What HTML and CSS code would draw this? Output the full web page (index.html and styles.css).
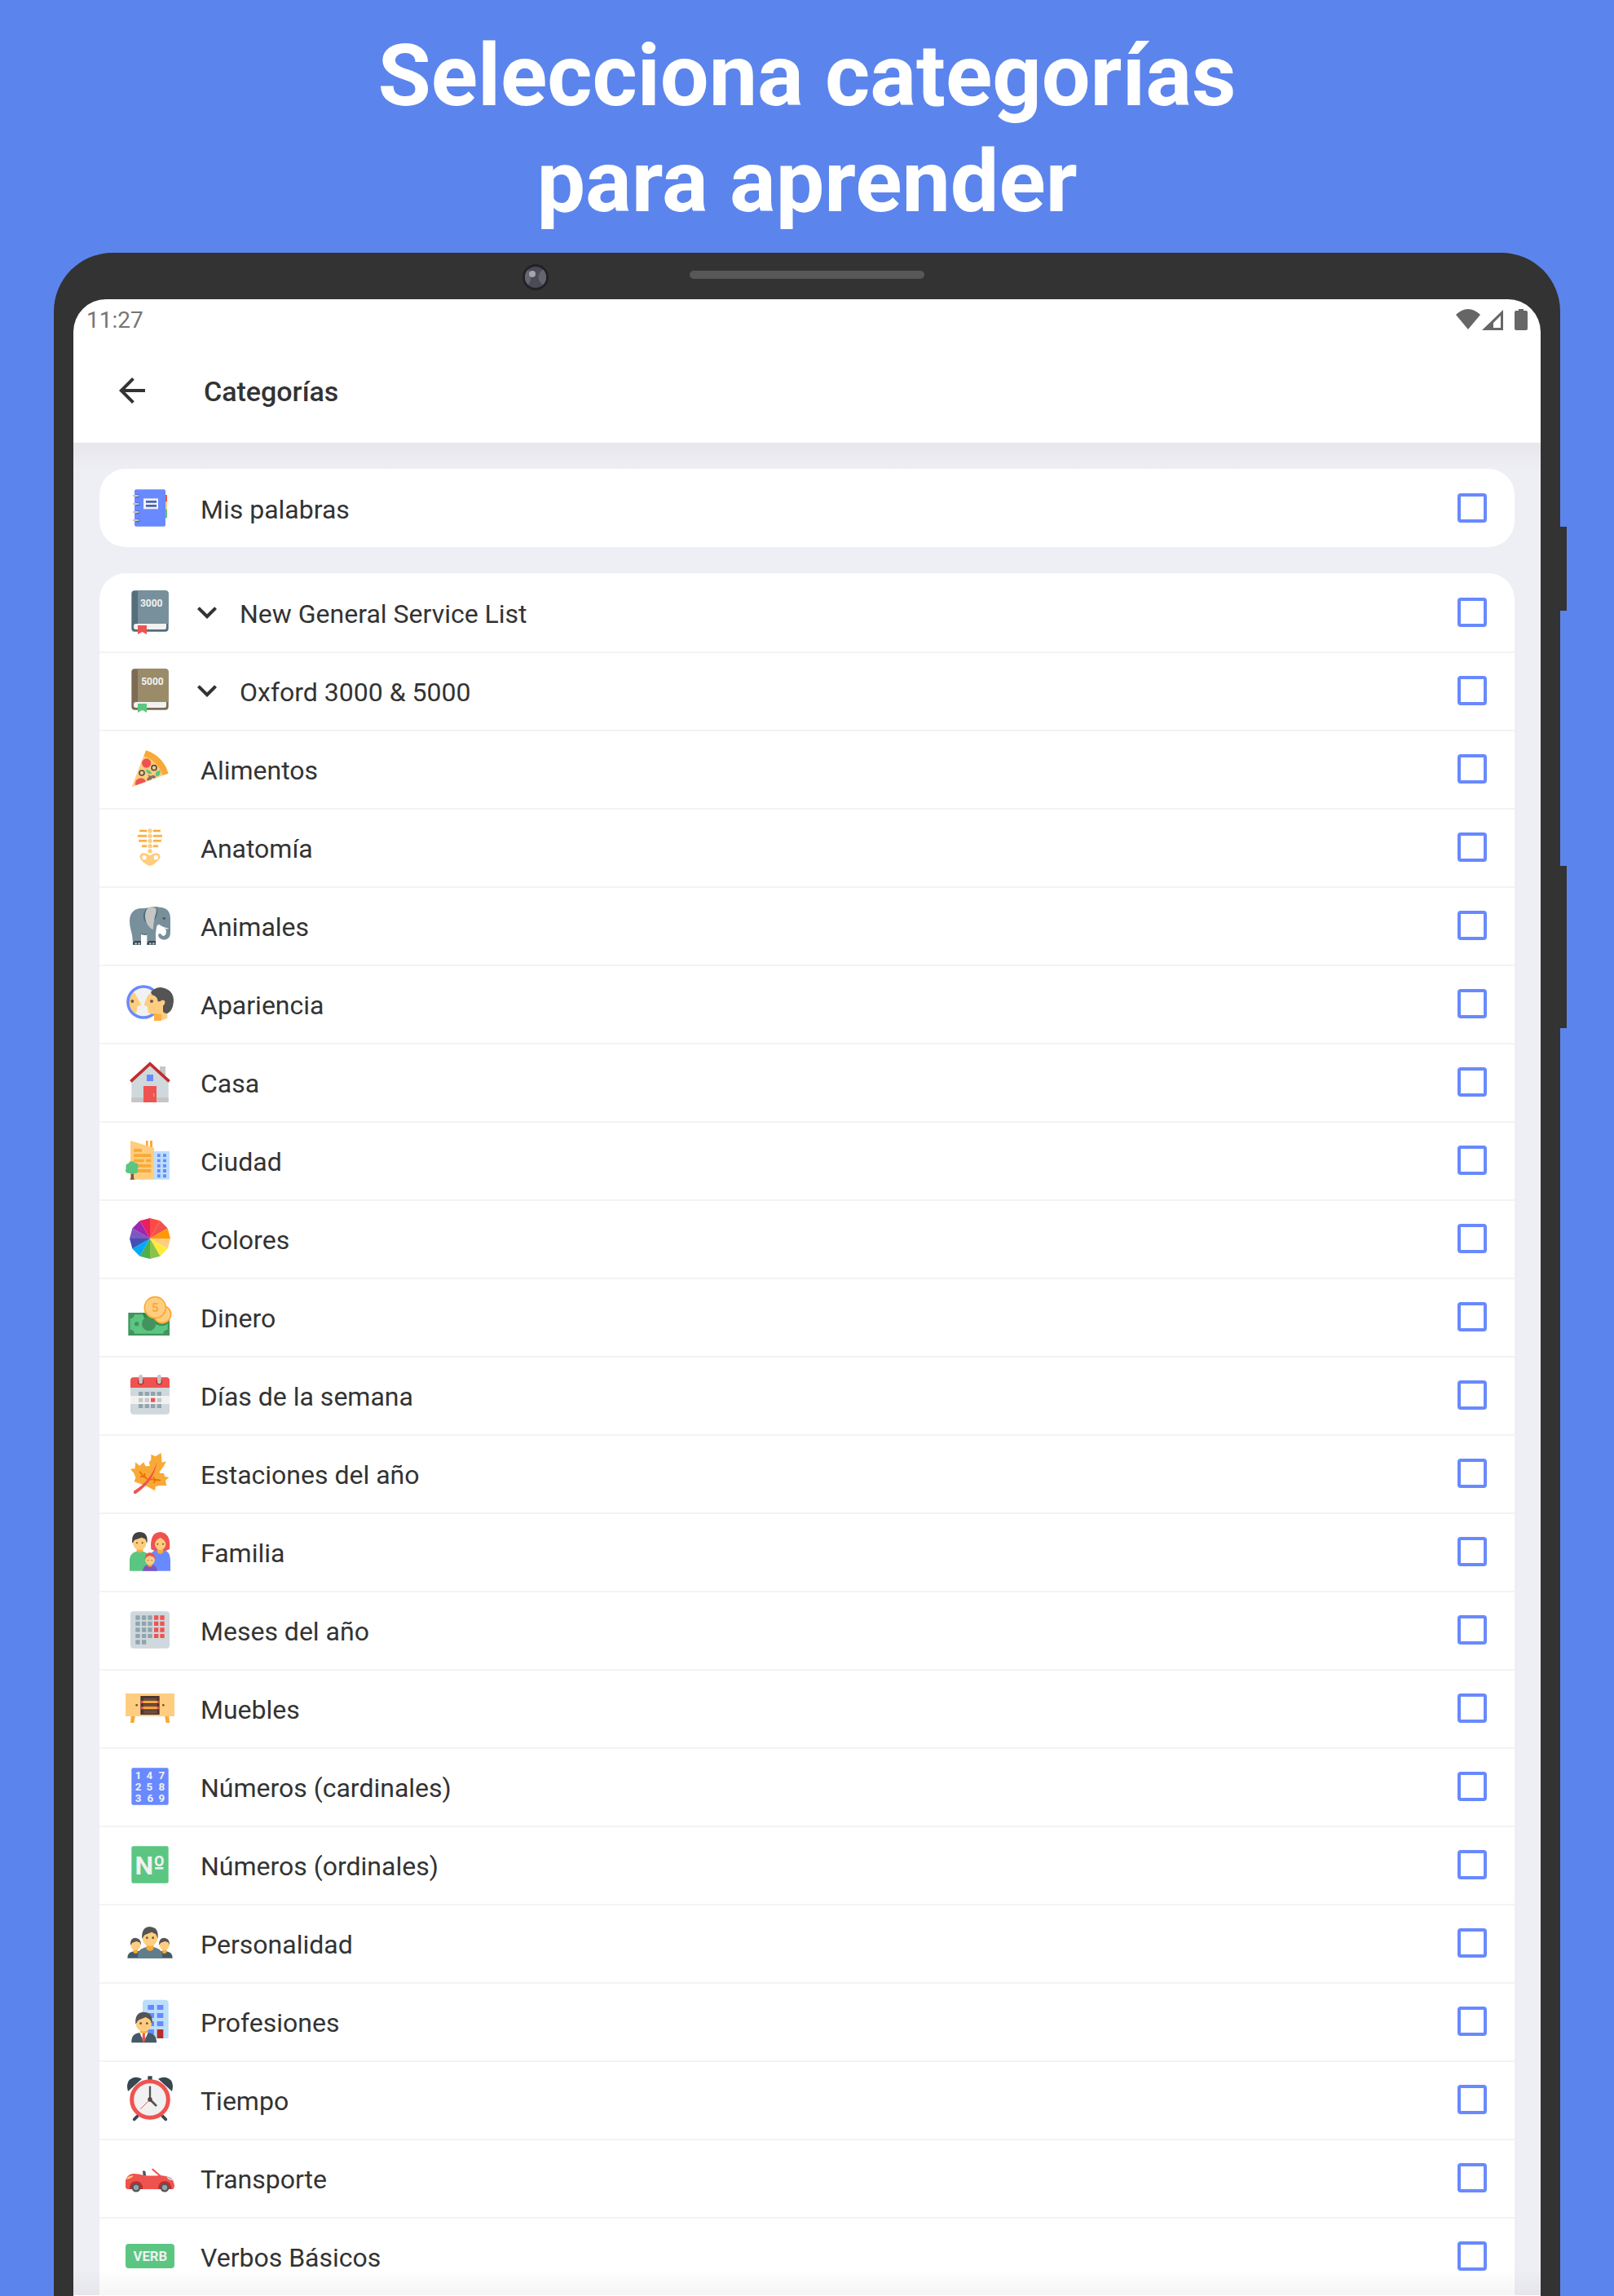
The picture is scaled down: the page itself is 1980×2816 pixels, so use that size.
FILE: index.html
```html
<!DOCTYPE html>
<html lang="es">
<head>
    <meta charset="UTF-8">
    <meta name="viewport" content="width=device-width, initial-scale=1.0">
    <title>Categorías</title>
    <link rel="stylesheet" href="styles.css">
</head>
<body>

    <h1 class="headline">Selecciona categorías<br>para aprender</h1>

    <div class="tablet">
        <!-- Camera, speaker and side buttons -->
        <svg class="camera" viewBox="0 0 32 32">
            <circle cx="16" cy="16" r="16" fill="#222226"/>
            <circle cx="16" cy="16" r="13" fill="#4b4b57"/>
            <path d="M7 6.500Q14 16 7 25.500A13 13 0 0 1 7 6.500zM25 6.500Q14 16 25 25.500A13 13 0 0 0 25 6.500z" fill="#656570"/>
            <circle cx="12" cy="12" r="4" fill="#a5a5ad"/>
        </svg>
        <div class="speaker"></div>
        <div class="side-button power"></div>
        <div class="side-button volume"></div>

        <div class="screen">
            <div class="status-bar">
                <span class="clock">11:27</span>
                <svg class="status-icons" viewBox="0 0 88 27">
                    <path d="M0 7Q15-7 30 7L15 25z"/>
                    <path d="M32 26L58 1V26zM46 23H55V8L46 17z" fill-rule="evenodd"/>
                    <path d="M72 4Q72 2 74 2H77V0H83V2H86Q88 2 88 4V24Q88 26 86 26H74Q72 26 72 24z"/>
                </svg>
            </div>

            <header class="app-bar">
                <button class="back" aria-label="Atrás">
                    <svg viewBox="0 0 24 24"><path d="M20 11H7.830l5.590-5.590L12 4l-8 8 8 8 1.410-1.410L7.830 13H20v-2z"/></svg>
                </button>
                <h2>Categorías</h2>
            </header>

            <main class="content">
                <ul class="card">
                    <li class="row">
                        <svg class="icon" viewBox="72 39 180 180">
                            <path fill="#ef5350" d="M216 81h9v26h-9z"/>
                            <path fill="#ffcd7f" d="M216 107h9v26h-9z"/>
                            <path fill="#5bc682" d="M216 133h9v33h-9z"/>
                            <rect x="105" y="61" width="114" height="136" rx="6" fill="#6889ff"/>
                            <path fill="#f1f1f1" d="M138 94h54v39h-54z"/>
                            <path fill="#4762b8" d="M147 102h39v8h-39zM147 117h39v8h-39z"/>
                            <g fill="#4d65bd"><circle cx="117" cy="85" r="7"/><circle cx="117" cy="115" r="7"/><circle cx="117" cy="145" r="7"/><circle cx="117" cy="175" r="7"/></g>
                            <path fill="#c6c6c6" d="M99 81h22v6H99zM99 111h22v6H99zM99 141h22v6H99zM99 171h22v6H99z"/>
                        </svg>
                        <label for="mis-palabras">Mis palabras</label>
                        <input type="checkbox" id="mis-palabras">
                    </li>
                </ul>

                <ul class="card">
                    <li class="row">
                        <svg class="icon" viewBox="72 423 180 180">
                            <rect x="94" y="433" width="136" height="151" rx="12" fill="#546e7a"/>
                            <path fill="#78909c" d="M117 433h101q12 0 12 12v110H117z"/>
                            <path fill="#f1f1f1" d="M110 555h112v14q0 7-7 7H110q-8 0-8-8v-5q0-8 8-8z"/>
                            <path fill="#ef5350" d="M117 561h33v33l-16-9-17 9z"/>
                            <text class="icon-text" x="167" y="492" font-size="36">3000</text>
                        </svg>
                        <button class="expand" aria-label="Mostrar niveles">
                            <svg viewBox="0 0 24 24"><path d="M7.410 8.590L12 13.170l4.590-4.580L18 10l-6 6-6-6z"/></svg>
                        </button>
                        <label for="ngsl">New General Service List</label>
                        <input type="checkbox" id="ngsl">
                    </li>
                    <li class="row">
                        <svg class="icon" viewBox="72 423 180 180">
                            <rect x="94" y="433" width="136" height="151" rx="12" fill="#7c6b55"/>
                            <path fill="#9a8c69" d="M117 433h101q12 0 12 12v110H117z"/>
                            <path fill="#f1f1f1" d="M110 555h112v14q0 7-7 7H110q-8 0-8-8v-5q0-8 8-8z"/>
                            <path fill="#5bc682" d="M117 561h33v33l-16-9-17 9z"/>
                            <text class="icon-text" x="171" y="492" font-size="36">5000</text>
                        </svg>
                        <button class="expand" aria-label="Mostrar niveles">
                            <svg viewBox="0 0 24 24"><path d="M7.410 8.590L12 13.170l4.590-4.580L18 10l-6 6-6-6z"/></svg>
                        </button>
                        <label for="oxford">Oxford 3000 &amp; 5000</label>
                        <input type="checkbox" id="oxford">
                    </li>
                    <li class="row">
                        <svg class="icon" viewBox="72 99 180 180">
                            <path fill="#ffcd7f" d="M139 140Q192 160 212 212L95 256z"/>
                            <path fill="#f9a936" d="M147 121Q209 140 230 206L209 213Q190 160 139 142z"/>
                            <circle cx="149" cy="168" r="17" fill="#ef5350"/>
                            <path fill="#ef5350" d="M109 250A19 19 0 1 1 147 236z"/>
                            <g fill="#ffcd7f" stroke="#4f4f4f" stroke-width="5"><circle cx="177" cy="185" r="9"/><circle cx="132" cy="204" r="9"/></g>
                            <path fill="#5bc682" d="M146 192Q162 190 169 207Q152 212 146 192zM199 194Q203 206 192 217Q176 214 185 200Q190 196 199 194z"/>
                            <path fill="#8d6e63" d="M152 233Q148 223 158 219L154 211L165 215Q177 208 184 219L178 224L170 222L168 228z"/>
                        </svg>
                        <label for="alimentos">Alimentos</label>
                        <input type="checkbox" id="alimentos">
                    </li>
                    <li class="row">
                        <svg class="icon" viewBox="72 387 180 180">
                            <path stroke="#ffe3b5" stroke-width="11" d="M123 417h28M117 436h34M120 454h31M132 473h19M173 417h28M173 436h34M173 454h31M173 473h19"/>
                            <path stroke="#f9a936" stroke-width="6" d="M124 417h26M117 436h33M121 454h29M132 473h18M174 417h26M174 436h33M174 454h29M174 473h18"/>
                            <g fill="#ffcd7f"><circle cx="162" cy="417" r="8"/><circle cx="162" cy="436" r="8"/><circle cx="162" cy="454" r="8"/><circle cx="162" cy="473" r="8"/><circle cx="162" cy="492" r="8"/></g>
                            <path fill="#ffcd7f" fill-rule="evenodd" d="M124 513Q125 499 139 499Q152 499 162 508Q172 499 186 499Q200 500 200 514Q197 525 175 541Q162 550 149 541Q124 524 124 513zM133 515a8 8 0 1 0 16 0a8 8 0 1 0-16 0zM176 515a8 8 0 1 0 16 0a8 8 0 1 0-16 0z"/>
                        </svg>
                        <label for="anatomia">Anatomía</label>
                        <input type="checkbox" id="anatomia">
                    </li>
                    <li class="row">
                        <svg class="icon" viewBox="72 675 180 180">
                            <path fill="#546e7a" d="M125 790h30v9q-15 6-30-4z"/>
                            <path fill="#78909c" d="M87 747Q89 703 132 702Q150 703 170 697Q191 695 196 698Q236 698 237 740V793Q236 818 214 818Q193 816 192 798Q200 792 203 797Q205 803 213 803Q222 801 221 782L189 763Q184 775 183 800V836H151V795Q140 800 129 793V836H99Q98 800 91 780Q87 765 87 747z"/>
                            <path fill="#546e7a" d="M150 702Q135 715 138 738Q142 752 150 755L160 710z"/>
                            <path fill="#c6c6c6" d="M144 735Q143 699 168 697Q192 700 188 726L182 721Q190 738 176 752Q175 766 173 781Q148 768 144 735z"/>
                            <path fill="#546e7a" d="M186 699Q193 712 188 726Q184 742 178 750Q179 728 184 722z"/>
                            <path fill="#fff" d="M192 759Q212 774 232 776Q215 782 196 769zM189 772Q190 764 195 764Q216 776 222 782Q221 801 213 803Q205 803 203 796Q199 792 192 798Q188 785 189 772z"/>
                            <circle cx="214" cy="739" r="5" fill="#545454"/>
                            <path fill="#37474f" d="M99 836q0-13 9-14h21v14zM151 836q0-13 9-14h23v14z"/>
                            <g fill="#b0bec5"><circle cx="110" cy="832" r="4"/><circle cx="122" cy="832" r="4"/><circle cx="163" cy="832" r="4"/><circle cx="175" cy="832" r="4"/></g>
                        </svg>
                        <label for="animales">Animales</label>
                        <input type="checkbox" id="animales">
                    </li>
                    <li class="row">
                        <svg class="icon" viewBox="72 93 180 180">
                            <circle cx="138" cy="177" r="57" fill="#f1f1f1" stroke="#6889ff" stroke-width="11"/>
                            <path fill="#ffcd7f" d="M102 141Q108 145 111 153L130 187L115 194L112 217L104 217Q85 200 86 177Q87 155 102 141z"/>
                            <path fill="#ffcd7f" d="M168 140L154 153L140 187Q145 194 153 192L155 214Q158 221 177 221V246H200L226 237V215L219 170L195 145z"/>
                            <path fill="#ffb03f" d="M177 218L204 222V245L177 247z"/>
                            <path fill="#545454" d="M165 140Q180 123 202 123Q250 130 249 175Q246 210 226 219Q217 220 210 213V190Q218 186 217 174Q210 164 200 175H191Q190 155 170 151z"/>
                            <path fill="#ffcd7f" d="M199 176Q205 167 214 172Q219 180 212 188H200z"/>
                            <g fill="#6d5d4b"><circle cx="97" cy="174" r="6"/><circle cx="168" cy="174" r="6"/></g>
                        </svg>
                        <label for="apariencia">Apariencia</label>
                        <input type="checkbox" id="apariencia">
                    </li>
                    <li class="row">
                        <svg class="icon" viewBox="72 381 180 180">
                            <path fill="#c6c6c6" d="M198 414h21v42h-21z"/>
                            <path fill="#cfd8dc" d="M94 468L162 406L230 468V546H94z"/>
                            <path fill="#c6c6c6" d="M94 528h136v18H94z"/>
                            <path fill="none" stroke="#c12d2d" stroke-width="11" d="M91 469L162 404L233 469"/>
                            <path fill="#ef5350" d="M138 486h48v60h-48z"/>
                            <path fill="#f9a936" d="M174 513h4v12h-4z"/>
                            <path fill="#6889ff" d="M150 444h24v24h-24z"/>
                        </svg>
                        <label for="casa">Casa</label>
                        <input type="checkbox" id="casa">
                    </li>
                    <li class="row">
                        <svg class="icon" viewBox="72 669 180 180">
                            <path fill="#f9a936" d="M147 687h8v30h-8zM162 687h9v30h-9z"/>
                            <path fill="#ffcd7f" d="M90 687L177 713V830H90z"/>
                            <path fill="#bbdefb" d="M177 726h57v104h-57z"/>
                            <path fill="#f9a936" d="M102 717h30v11h-30zM102 736h64v11h-64zM102 755h38v11h-38zM147 755h19v11h-19zM102 774h64v11h-64zM102 792h64v12h-64z"/>
                            <path fill="#6889ff" d="M189 736h11v11h-11zM210 736h12v11h-12zM189 755h11v11h-11zM210 755h12v11h-12zM189 774h11v11h-11zM210 774h12v11h-12zM189 792h11v12h-11zM210 792h12v12h-12zM189 811h11v12h-11zM210 811h12v12h-12z"/>
                            <path fill="#795548" d="M92 795h10v28l3 7H88l4-7z"/>
                            <g fill="#5bc682"><circle cx="95" cy="775" r="12"/><circle cx="84" cy="782" r="11"/><circle cx="108" cy="780" r="11"/><circle cx="83" cy="796" r="11"/><circle cx="107" cy="797" r="11"/><circle cx="96" cy="798" r="12"/><circle cx="96" cy="787" r="14"/></g>
                        </svg>
                        <label for="ciudad">Ciudad</label>
                        <input type="checkbox" id="ciudad">
                    </li>
                    <li class="row">
                        <svg class="icon" viewBox="72 87 180 180">
                            <path fill="#ff4a43" d="M162 177V102L199.500 112z"/>
                            <path fill="#ef5350" d="M162 177L199.500 112L227 139.500z"/>
                            <path fill="#ff9800" d="M162 177L227 139.500L237 177z"/>
                            <path fill="#ffcd7f" d="M162 177H237L227 214.500z"/>
                            <path fill="#ffeb3b" d="M162 177L227 214.500L199.500 242z"/>
                            <path fill="#8bc34a" d="M162 177L199.500 242L162 252z"/>
                            <path fill="#4caf50" d="M162 177V252L124.500 242z"/>
                            <path fill="#03a9f4" d="M162 177L124.500 242L97 214.500z"/>
                            <path fill="#3f51b5" d="M162 177L97 214.500L87 177z"/>
                            <path fill="#7e57c2" d="M162 177H87L97 139.500z"/>
                            <path fill="#9c27b0" d="M162 177L97 139.500L124.500 112z"/>
                            <path fill="#e91e63" d="M162 177L124.500 112L162 102z"/>
                        </svg>
                        <label for="colores">Colores</label>
                        <input type="checkbox" id="colores">
                    </li>
                    <li class="row">
                        <svg class="icon" viewBox="72 375 180 180">
                            <path fill="#43935f" d="M82 450h152v84H82z"/>
                            <path fill="#5bc682" d="M105 457H211Q211 470 227 472V512Q212 513 211 527H105Q104 513 89 512V472Q104 471 105 457z"/>
                            <path fill="#2e8b47" d="M135 450H234V475Q228 498 207 498Q186 496 178 486Q138 482 135 450z"/>
                            <g fill="#43935f"><circle cx="158" cy="491" r="26"/><circle cx="113" cy="491" r="8"/><circle cx="203" cy="491" r="8"/></g>
                            <g fill="#ffcd7f" stroke="#f9a936" stroke-width="5"><circle cx="207" cy="456" r="32"/><circle cx="181" cy="431" r="39"/></g>
                            <text class="icon-text coin" x="181" y="447" font-size="46">5</text>
                        </svg>
                        <label for="dinero">Dinero</label>
                        <input type="checkbox" id="dinero">
                    </li>
                    <li class="row">
                        <svg class="icon" viewBox="72 663 180 180">
                            <rect x="90" y="688" width="144" height="136" rx="12" fill="#cfd8dc"/>
                            <path fill="#f1f1f1" d="M90 756h144v30H90z"/>
                            <path fill="#ef5350" d="M90 726V700q0-12 12-12H222q12 0 12 12V726z"/>
                            <g fill="#b3282e"><circle cx="128" cy="704" r="11"/><circle cx="196" cy="704" r="11"/></g>
                            <g fill="#c6c6c6"><rect x="121" y="678" width="14" height="34" rx="7"/><rect x="189" y="678" width="14" height="34" rx="7"/></g>
                            <path fill="#90a4ae" d="M120 741h16v15h-16zM143 741h16v15h-16zM165 741h16v15h-16zM188 741h16v15h-16zM120 786h16v15h-16zM143 786h16v15h-16zM165 786h16v15h-16zM188 786h16v15h-16z"/>
                            <path fill="#c6c6c6" d="M120 764h16v15h-16zM143 764h16v15h-16zM188 764h16v15h-16z"/>
                            <path fill="#ef5350" d="M165 764h16v15h-16z"/>
                        </svg>
                        <label for="dias">Días de la semana</label>
                        <input type="checkbox" id="dias">
                    </li>
                    <li class="row">
                        <svg class="icon" viewBox="72 81 180 180">
                            <path fill="#f9a936" d="M203 96L206 131L222 127L211 147L196 167L201 171L213 170L216 182L232 186L219 197L223 217L203 215L183 219L180 235L155 221L130 211L104 202L109 187L103 171L90 155L107 153L108 130L124 143L138 130L146 145L162 144L158 131L166 121V101L182 109z"/>
                            <path fill="none" stroke="#ef6c00" stroke-width="5" d="M157 193Q140 188 124 164M126 184L143 182L142 171M157 193Q175 193 201 197M174 184L181 195L176 207"/>
                            <path fill="#ef5350" d="M187 130Q178 200 110 246H103L102 236Q166 200 187 130z"/>
                        </svg>
                        <label for="estaciones">Estaciones del año</label>
                        <input type="checkbox" id="estaciones">
                    </li>
                    <li class="row">
                        <svg class="icon" viewBox="72 369 180 180">
                            <path fill="#5bc682" d="M87 530V490Q88 460 124 456Q156 460 162 482V530z"/>
                            <path fill="#f9a936" d="M113 442h23v16q-11 8-23 0z"/>
                            <ellipse cx="124" cy="427" rx="25" ry="26" fill="#ffcd7f"/>
                            <path fill="#424242" d="M97 429Q92 388 124 387Q157 388 151 429L145 413L132 407L105 416z"/>
                            <path fill="#ef5350" d="M166 450Q160 388 200 387Q240 390 234 450Q216 460 200 458Q180 460 166 450z"/>
                            <path fill="#6889ff" d="M162 530V474Q170 454 188 454H212Q237 458 237 490V530z"/>
                            <path fill="#f9a936" d="M189 445h22v16q-11 14-22 0z"/>
                            <path fill="#ffcd7f" d="M180 433Q180 418 200 408Q220 418 220 433Q218 450 200 454Q182 450 180 433z"/>
                            <path fill="#7e57c2" d="M135 530Q136 508 162 507Q188 508 189 530z"/>
                            <path fill="#f9a936" d="M154 502h16v10q-8 6-16 0z"/>
                            <ellipse cx="162" cy="488" rx="18" ry="20" fill="#ffcd7f"/>
                            <path fill="#ef5350" d="M143 490Q142 464 162 462Q182 465 181 490L175 479L160 474L149 480z"/>
                            <g fill="#6d4c30"><circle cx="114" cy="427" r="3"/><circle cx="134" cy="427" r="3"/><circle cx="190" cy="431" r="3"/><circle cx="210" cy="431" r="3"/><circle cx="155" cy="491" r="2"/><circle cx="169" cy="491" r="2"/></g>
                        </svg>
                        <label for="familia">Familia</label>
                        <input type="checkbox" id="familia">
                    </li>
                    <li class="row">
                        <svg class="icon" viewBox="72 657 180 180">
                            <rect x="90" y="679" width="144" height="136" rx="12" fill="#cfd8dc"/>
                            <path fill="#90a4ae" d="M109 694h16v16h-16zM132 694h16v16h-16zM154 694h16v16h-16zM109 716h16v16h-16zM132 716h16v16h-16zM154 716h16v16h-16zM109 739h16v16h-16zM132 739h16v16h-16zM154 739h16v16h-16zM109 762h16v15h-16zM132 762h16v15h-16zM154 762h16v15h-16zM109 784h16v16h-16zM132 784h16v16h-16z"/>
                            <path fill="#ef5350" d="M177 694h16v16h-16zM199 694h16v16h-16zM177 716h16v16h-16zM199 716h16v16h-16zM177 739h16v16h-16zM199 739h16v16h-16zM177 762h16v15h-16zM199 762h16v15h-16z"/>
                        </svg>
                        <label for="meses">Meses del año</label>
                        <input type="checkbox" id="meses">
                    </li>
                    <li class="row">
                        <svg class="icon" viewBox="72 105 180 180">
                            <path fill="#f9a936" d="M92 223h16l-5 26H90zM216 223h16l2 26h-13z"/>
                            <path fill="#ffcd7f" d="M72 141h180v84H72z"/>
                            <path fill="#4e342e" d="M127 150h70v69h-70z"/>
                            <path fill="#6d4c41" d="M137 158h51v10h-51zM137 180h51v9h-51zM137 203h51v12h-51z"/>
                            <path fill="#ef5350" d="M129 168h67v9h-67zM129 190h67v9h-67z"/>
                            <path fill="#f9a936" d="M137 168h51v9h-51zM137 190h51v9h-51z"/>
                            <g fill="#6d4c41"><circle cx="113" cy="184" r="4"/><circle cx="211" cy="184" r="4"/></g>
                        </svg>
                        <label for="muebles">Muebles</label>
                        <input type="checkbox" id="muebles">
                    </li>
                    <li class="row">
                        <svg class="icon" viewBox="72 393 180 180">
                            <rect x="94" y="415" width="136" height="136" rx="6" fill="#6889ff"/>
                            <g class="icon-text" font-size="40">
                                <text x="119" y="456">1</text><text x="160" y="456">4</text><text x="205" y="456">7</text>
                                <text x="119" y="498">2</text><text x="160" y="498">5</text><text x="205" y="498">8</text>
                                <text x="119" y="539">3</text><text x="163" y="539">6</text><text x="205" y="539">9</text>
                            </g>
                        </svg>
                        <label for="cardinales">Números (cardinales)</label>
                        <input type="checkbox" id="cardinales">
                    </li>
                    <li class="row">
                        <svg class="icon" viewBox="72 681 180 180">
                            <rect x="94" y="703" width="136" height="136" rx="6" fill="#5bc682"/>
                            <text class="icon-text" x="162" y="806" font-size="96">Nº</text>
                            <path fill="#f1f1f1" d="M180 780h31v8h-31z"/>
                        </svg>
                        <label for="ordinales">Números (ordinales)</label>
                        <input type="checkbox" id="ordinales">
                    </li>
                    <li class="row">
                        <svg class="icon" viewBox="72 99 180 180">
                            <path fill="#455a64" d="M79 245Q78 220 109 219H215Q246 220 245 245z"/>
                            <path fill="#f9a936" d="M101 208h16v16q-8 8-16 0zM207 208h16v16q-8 8-16 0z"/>
                            <g fill="#ffcd7f"><ellipse cx="109" cy="196" rx="18" ry="20"/><ellipse cx="215" cy="196" rx="18" ry="20"/></g>
                            <path fill="#545454" d="M90 197Q88 170 109 170L114 172Q130 176 129 197L124 187L112 183L97 188zM195 197Q194 170 215 170L220 172Q235 176 234 197L229 187L217 183L202 188z"/>
                            <path fill="#607d8b" d="M117 245V232Q120 205 162 203Q204 205 207 232V245z"/>
                            <path fill="#f9a936" d="M149 190h26v22q-13 12-26 0z"/>
                            <ellipse cx="162" cy="171" rx="28" ry="30" fill="#ffcd7f"/>
                            <path fill="#545454" d="M133 174Q129 132 160 129L172 131Q195 136 191 174L184 157L168 149L142 160z"/>
                            <g fill="#6d4c30"><circle cx="151" cy="170" r="4"/><circle cx="173" cy="170" r="4"/></g>
                        </svg>
                        <label for="personalidad">Personalidad</label>
                        <input type="checkbox" id="personalidad">
                    </li>
                    <li class="row">
                        <svg class="icon" viewBox="72 387 180 180">
                            <path fill="#bbdefb" d="M135 540V410Q135 398 147 398H218Q230 398 230 410V540z"/>
                            <path fill="#6889ff" d="M154 417h23v18h-23zM188 417h23v18h-23zM154 447h23v18h-23zM188 447h23v18h-23zM154 477h23v18h-23zM188 477h23v18h-23zM154 507h23v18h-23z"/>
                            <path fill="#b72b2b" d="M188 507h23v33h-23z"/>
                            <path fill="#455a64" d="M94 556Q92 522 125 519H154Q187 522 186 556z"/>
                            <path fill="#fff" d="M124 519L139 554L155 519z"/>
                            <path fill="#ef5350" d="M134 521h11l-2 9 3 12-7 13-7-13 3-12z"/>
                            <path fill="#f9a936" d="M126 504h27v14q-13 8-27 0z"/>
                            <ellipse cx="139" cy="486" rx="29" ry="29" fill="#ffcd7f"/>
                            <path fill="#545454" d="M109 488Q105 446 137 443L150 445Q173 450 170 488L162 471L146 462L119 473z"/>
                            <g fill="#6d4c30"><circle cx="128" cy="485" r="4"/><circle cx="151" cy="485" r="4"/></g>
                        </svg>
                        <label for="profesiones">Profesiones</label>
                        <input type="checkbox" id="profesiones">
                    </li>
                    <li class="row">
                        <svg class="icon" viewBox="72 675 180 180">
                            <path fill="#37474f" d="M81 735Q74 710 84 695Q105 675 132 689zM243 735Q250 710 240 695Q219 675 192 689zM154 679h16v14h-16z"/>
                            <path stroke="#37474f" stroke-width="11" stroke-linecap="round" d="M104 838L116 826M220 838L208 826"/>
                            <circle cx="162" cy="765" r="67" fill="#f1f1f1" stroke="#ef5350" stroke-width="15"/>
                            <path stroke="#545454" stroke-width="7" d="M162 765V716"/>
                            <path stroke="#545454" stroke-width="8" d="M162 765L186 789"/>
                            <path stroke="#ef5350" stroke-width="3" d="M162 765L127 800"/>
                            <circle cx="162" cy="765" r="8" fill="#424242"/>
                            <circle cx="162" cy="765" r="4" fill="#c12d2d"/>
                        </svg>
                        <label for="tiempo">Tiempo</label>
                        <input type="checkbox" id="tiempo">
                    </li>
                    <li class="row">
                        <svg class="icon" viewBox="282 123 180 180">
                            <path fill="#545454" d="M345 188Q350 184 355 190L358 206H347z"/>
                            <path stroke="#ef5350" stroke-width="6" stroke-linecap="round" d="M382 182L410 206"/>
                            <path fill="#ef5350" d="M282 225Q286 202 308 198Q330 197 346 203Q375 208 408 204Q435 206 450 214Q460 224 462 240Q462 255 454 255H290Q281 254 282 245z"/>
                            <path fill="#c12d2d" d="M297 255Q296 225 321 225Q346 226 346 255zM402 255Q402 225 427 225Q451 226 451 255z"/>
                            <path fill="#ffcd7f" d="M285 219Q290 206 311 205Q305 216 285 219z"/>
                            <path fill="#bbdefb" d="M434 209Q450 212 456 223Q437 222 434 209z"/>
                            <g fill="#90a4ae" stroke="#545454" stroke-width="7"><circle cx="321" cy="249" r="13"/><circle cx="426" cy="249" r="13"/></g>
                        </svg>
                        <label for="transporte">Transporte</label>
                        <input type="checkbox" id="transporte">
                    </li>
                    <li class="row">
                        <svg class="icon" viewBox="282 411 180 180">
                            <rect x="282" y="456" width="180" height="90" rx="12" fill="#5bc682"/>
                            <text class="icon-text" x="373" y="519" font-size="50">VERB</text>
                        </svg>
                        <label for="verbos">Verbos Básicos</label>
                        <input type="checkbox" id="verbos">
                    </li>
                </ul>
            </main>
        </div>
    </div>

</body>
</html>
```
FILE: styles.css
```css
* {
    box-sizing: border-box;
}

body {
    display: flex;
    flex-direction: column;
    min-height: 100vh;
    margin: 0;
    font-family: Roboto, sans-serif;
    color: #333;
    background-color: #5b85ed;
}

.headline {
    margin: 0;
    padding: 28px 24px 22px;
    font-size: 106px;
    font-weight: 700;
    line-height: 130px;
    text-align: center;
    color: #fff;
}

/* Device frame */
.tablet {
    position: relative;
    display: flex;
    flex: 1;
    flex-direction: column;
    margin: 0 66px;
    padding: 57px 24px 0;
    background-color: #333;
    border-radius: 72px 72px 0 0;
}

.camera {
    position: absolute;
    top: 14px;
    left: 31%;
    width: 32px;
    height: 32px;
    margin: 0 2px;
}

.speaker {
    position: absolute;
    top: 22px;
    left: 50%;
    width: 288px;
    height: 10px;
    margin-left: -144px;
    background-color: #585858;
    border-radius: 5px;
}

.side-button {
    position: absolute;
    right: -8px;
    width: 8px;
    background-color: #333;
}

.power {
    top: 336px;
    height: 103px;
}

.volume {
    top: 752px;
    height: 199px;
}

.screen {
    flex: 1;
    background-color: #fff;
    border-radius: 40px 40px 0 0;
    overflow: hidden;
}

.status-bar {
    display: flex;
    justify-content: space-between;
    align-items: center;
    height: 48px;
    padding: 2px 16px 0;
}

.clock {
    font-size: 28px;
    color: #757575;
}

.status-icons {
    width: 88px;
    height: 27px;
    fill: #666;
}

.app-bar {
    display: flex;
    align-items: center;
    height: 128px;
    padding: 0 48px;
}

.app-bar h2 {
    margin: 0 0 0 64px;
    padding-top: 2px;
    font-size: 34px;
    font-weight: 500;
}

button {
    display: block;
    width: 48px;
    height: 48px;
    padding: 0;
    background: none;
    border: none;
    cursor: pointer;
}

button svg {
    display: block;
    fill: #333;
}

/* Category lists */
.content {
    padding: 32px 32px 0;
    background-color: #eeeef5;
    background-image: linear-gradient(#e6e6eb, #eeeef5 32px);
    position: relative;
}

.content::after {
    content: "";
    position: absolute;
    left: 0;
    right: 0;
    bottom: 0;
    height: 32px;
    background-image: linear-gradient(rgba(0, 0, 0, 0), rgba(0, 0, 0, 0.04));
    pointer-events: none;
}

.card {
    margin: 0;
    padding: 0;
    list-style: none;
    background-color: #fff;
    border-radius: 32px;
}

.card + .card {
    margin-top: 32px;
    border-radius: 32px 32px 0 0;
}

.row {
    display: flex;
    align-items: center;
    height: 96px;
    padding: 0 34px 0 32px;
}

.row + .row {
    padding-bottom: 2px;
    border-top: 2px solid #f3f3f3;
}

.icon {
    flex: none;
    width: 60px;
    height: 60px;
    margin-right: 32px;
}

.icon-text {
    font-weight: 700;
    text-anchor: middle;
    fill: #f1f1f1;
}

.coin {
    fill: #f9a936;
}

.expand {
    margin: 0 16px 0 -16px;
}

.row label {
    flex: 1;
    padding-top: 4px;
    font-size: 32px;
}

input[type="checkbox"] {
    appearance: none;
    width: 36px;
    height: 36px;
    margin: 0;
    background-color: #fff;
    border: 4px solid #6889ff;
    border-radius: 4px;
    cursor: pointer;
}

input[type="checkbox"]:checked {
    background-color: #6889ff;
}
```
